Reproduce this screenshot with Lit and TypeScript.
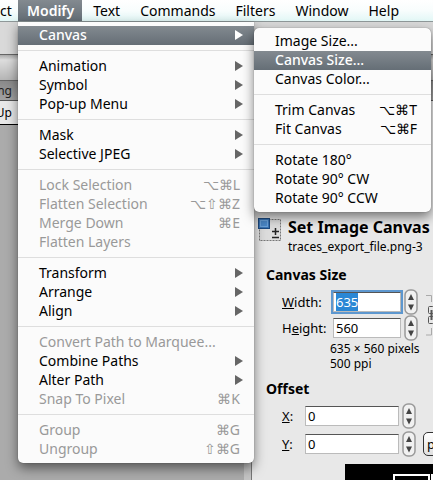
import { LitElement, html, css, nothing } from "lit";
import { customElement, property, query } from "lit/decorators.js";

type Item = { label: string; keys?: string; sub?: boolean; off?: boolean; on?: boolean };

const MODIFY: Item[][] = [
  [{ label: "Canvas", sub: true, on: true }],
  [{ label: "Animation", sub: true }, { label: "Symbol", sub: true }, { label: "Pop-up Menu", sub: true }],
  [{ label: "Mask", sub: true }, { label: "Selective JPEG", sub: true }],
  [
    { label: "Lock Selection", keys: "⌥⌘L", off: true },
    { label: "Flatten Selection", keys: "⌥⇧⌘Z", off: true },
    { label: "Merge Down", keys: "⌘E", off: true },
    { label: "Flatten Layers", off: true },
  ],
  [{ label: "Transform", sub: true }, { label: "Arrange", sub: true }, { label: "Align", sub: true }],
  [
    { label: "Convert Path to Marquee...", off: true },
    { label: "Combine Paths", sub: true },
    { label: "Alter Path", sub: true },
    { label: "Snap To Pixel", keys: "⌘K", off: true },
  ],
  [{ label: "Group", keys: "⌘G", off: true }, { label: "Ungroup", keys: "⇧⌘G", off: true }],
];

const CANVAS: Item[][] = [
  [{ label: "Image Size..." }, { label: "Canvas Size...", on: true }, { label: "Canvas Color..." }],
  [{ label: "Trim Canvas", keys: "⌥⌘T" }, { label: "Fit Canvas", keys: "⌥⌘F" }],
  [{ label: "Rotate 180°" }, { label: "Rotate 90° CW" }, { label: "Rotate 90° CCW" }],
];

@customElement("menu-panel")
export class MenuPanel extends LitElement {
  @property({ attribute: false }) groups: Item[][] = [];

  static styles = css`
    :host {
      display: block;
      background: #fbfbfb;
      border-radius: 0 0 5px 5px;
      padding: 4px 0;
      box-sizing: border-box;
      box-shadow: 0 5px 12px rgba(0, 0, 0, 0.5), 0 0 1px rgba(0, 0, 0, 0.5);
    }
    hr {
      height: 1px;
      margin: 5px 0 6px;
      border: 0;
      background: #dedede;
    }
    button {
      display: flex;
      align-items: center;
      justify-content: space-between;
      width: 100%;
      height: 19px;
      padding: 0 14px 2px 21px;
      border: 0;
      background: none;
      color: #000;
      font: 14px/17px "Noto Sans", sans-serif;
      white-space: nowrap;
    }
    button:disabled {
      color: #999;
    }
    .on {
      background: linear-gradient(#838a90, #656e76);
      color: #fff;
      font-weight: 500;
    }
    .arrow {
      width: 8px;
      height: 10px;
      margin-right: -3px;
      fill: #666;
    }
    .on .arrow {
      fill: #fff;
    }
  `;

  render() {
    return this.groups.map(
      (g, i) => html`${i ? html`<hr />` : nothing}${g.map(
        (it) => html`<button class=${it.on ? "on" : ""} ?disabled=${it.off} role="menuitem">
          <span>${it.label}</span>
          ${it.keys ? html`<span>${it.keys}</span>` : nothing}
          ${it.sub ? html`<svg class="arrow" viewBox="0 0 8 10"><path d="M0 0 8 5 0 10Z" /></svg>` : nothing}
        </button>`
      )}`
    );
  }
}

const stepper = html`<button class="step" aria-label="Step value">
  <svg viewBox="0 0 14 26">
    <rect x="1" y="1" width="12" height="24" rx="5" fill="#f1f1f1" stroke="#999" stroke-width="1.500" />
    <path d="M7 5 10 11H4ZM7 21.500 10 15.500H4Z" fill="#444" />
  </svg>
</button>`;

@customElement("app-root")
export class AppRoot extends LitElement {
  @query("#width") private widthField!: HTMLInputElement;

  static styles = css`
    :host {
      display: flex;
      flex-direction: column;
      position: relative;
      min-height: 100vh;
      overflow: hidden;
      background: #ababab;
      color: #000;
      font-family: "Noto Sans", sans-serif;
    }
    .bar {
      display: flex;
      gap: 2px;
      height: 22px;
      box-sizing: border-box;
      border-bottom: 1px solid #8f9899;
      background: linear-gradient(#fff, #f8fdfd 50%, #e2f7f6);
    }
    .bar button {
      padding: 0 9px;
      border: 0;
      background: none;
      color: #000;
      font: 14px/20px "Noto Sans", sans-serif;
      white-space: nowrap;
    }
    .bar .cut {
      width: 16px;
      padding: 0;
      text-align: left;
    }
    .bar .open {
      padding: 0 8px 0 9px;
      background: linear-gradient(#838a90, #656e76);
      color: #fff;
      font-weight: 600;
    }
    .strip {
      height: 32px;
      background: #d9d9d9;
      border-bottom: 1px solid #666;
    }
    .tools {
      height: 25px;
      background: linear-gradient(#aaa, #ddd 20%, #b5b5b5);
      border-bottom: 1px solid #666;
    }
    .tab {
      height: 19px;
      background: linear-gradient(#8a8a8a, #a2a2a2);
      border-bottom: 1px solid #555;
      color: #222;
      font-size: 12px;
      line-height: 19px;
    }
    .edge {
      display: flex;
      justify-content: flex-end;
      width: 12px;
    }
    .behind {
      flex: 1;
      display: grid;
      grid-template-columns: 252px 1fr;
    }
    .canvas {
      border-right: 1px solid #777;
      box-shadow: inset -7px 0 #c4c4c4;
    }
    .head {
      height: 23px;
      background: #e8e8e8;
      border-bottom: 1px solid #000;
      font-size: 12px;
      line-height: 23px;
    }
    .dialog {
      display: flex;
      flex-direction: column;
      min-width: 0;
      padding: 114px 0 0 6px;
      background: #e8e8e8;
      overflow: hidden;
      font-size: 13px;
    }
    .title {
      display: flex;
      gap: 6px;
      margin-bottom: 3px;
    }
    .title svg {
      flex: none;
      width: 24px;
      height: 24px;
      margin-top: 3px;
    }
    h1 {
      margin: 0;
      font: 700 16px/24px "Noto Sans", sans-serif;
      white-space: nowrap;
    }
    p {
      margin: 0;
      font-size: 12px;
      line-height: 15px;
      white-space: nowrap;
    }
    h2 {
      margin: 8px 0 4px 8px;
      font: 700 14px/20px "Noto Sans", sans-serif;
    }
    .size {
      display: flex;
      align-items: center;
      gap: 7px;
      margin-left: 24px;
    }
    .offset {
      display: flex;
      flex-direction: column;
      gap: 2px;
      margin-left: 24px;
    }
    .row {
      display: flex;
      align-items: center;
      height: 26px;
    }
    label {
      flex: none;
      width: 51px;
    }
    .offset label {
      width: 23px;
    }
    input {
      flex: none;
      width: 68px;
      height: 20px;
      box-sizing: border-box;
      margin: 0 3px 0 0;
      padding: 0 2px;
      border: 1px solid #bbb;
      border-top: 1px solid #555;
      outline: 0;
      background: #fff;
      font: 13px/18px "Noto Sans", sans-serif;
    }
    .offset input {
      width: 94px;
    }
    #width {
      box-shadow: 0 0 0 2px #5d97cf;
    }
    input::selection {
      background: #2a87d5;
      color: #fff;
    }
    .step {
      flex: none;
      width: 14px;
      height: 26px;
      padding: 0;
      border: 0;
      background: none;
    }
    .step svg {
      display: block;
    }
    .chain {
      flex: none;
      width: 9px;
      height: 42px;
      fill: none;
      stroke: #555;
    }
    .notes {
      margin-left: 72px;
    }
    select {
      flex: none;
      appearance: none;
      width: 60px;
      height: 24px;
      margin-left: 7px;
      padding: 0 3px;
      border: 1px solid #333;
      border-radius: 5px;
      background: linear-gradient(#fff, #e0e0e0);
      color: #000;
      font: 13px/20px "Noto Sans", sans-serif;
    }
    .preview {
      flex: 1;
      min-height: 16px;
      margin: 7px 0 0 87px;
      background: #000;
    }
    .preview svg {
      display: block;
      width: 88px;
      height: 16px;
    }
    .menu {
      position: absolute;
      top: 22px;
      left: 18px;
      width: 236px;
    }
    .sub {
      position: absolute;
      top: 28px;
      left: 254px;
      width: 177px;
      border-radius: 5px;
    }
  `;

  firstUpdated() {
    this.widthField.focus();
    this.widthField.select();
  }

  render() {
    return html`
      <nav class="bar">
        <button class="cut">ct</button>
        <button class="open">Modify</button>
        ${["Text", "Commands", "Filters", "Window", "Help"].map((t) => html`<button>${t}</button>`)}
      </nav>
      <div class="strip"></div>
      <div class="tools"></div>
      <div class="tab"><div class="edge">ng</div></div>
      <main class="behind">
        <div class="canvas"><div class="head"><div class="edge">Up</div></div></div>
        <section class="dialog">
          <div class="title">
            <svg viewBox="0 0 24 24">
              <rect x="1.500" y="1.500" width="21" height="21" fill="#dcdcdc" stroke="#777" stroke-dasharray="2 1" />
              <rect x="0.500" y="0.500" width="11" height="10" fill="#3a74b4" stroke="#1d4a80" />
              <rect x="2.500" y="2.500" width="7" height="6" fill="#4b88c8" stroke="#6ba2da" />
              <path d="M14 13.500H21M17.500 10V17M14 19.500H21" stroke="#222" stroke-width="1.500" />
            </svg>
            <div>
              <h1>Set Image Canvas</h1>
              <p>traces_export_file.png-3</p>
            </div>
          </div>
          <h2>Canvas Size</h2>
          <div class="size">
            <div>
              <div class="row">
                <label for="width"><u>W</u>idth:</label><input id="width" value="635" />${stepper}
              </div>
              <div class="row">
                <label for="height">H<u>e</u>ight:</label><input id="height" value="560" />${stepper}
              </div>
            </div>
            <svg class="chain" viewBox="0 0 9 42">
              <path d="M1 1.500H6.500V8M1 41H6.500V34" stroke="#aaa" />
              <rect x="3.500" y="12.500" width="5" height="7" rx="1" />
              <rect x="3.500" y="22.500" width="5" height="7" rx="1" />
              <path d="M6.500 16V26" stroke-width="2" />
            </svg>
          </div>
          <div class="notes">
            <p>635 × 560 pixels</p>
            <p>500 ppi</p>
          </div>
          <h2>Offset</h2>
          <div class="offset">
            <div class="row"><label for="x"><u>X</u>:</label><input id="x" value="0" />${stepper}</div>
            <div class="row">
              <label for="y"><u>Y</u>:</label><input id="y" value="0" />${stepper}
              <select aria-label="Unit"><option>p</option></select>
            </div>
          </div>
          <div class="preview">
            <svg viewBox="0 0 88 16">
              <path d="M49 16V11H84V16M87 16V11H92" fill="none" stroke="#fff" stroke-width="2" />
            </svg>
          </div>
        </section>
      </main>
      <menu-panel class="menu" .groups=${MODIFY}></menu-panel>
      <menu-panel class="sub" .groups=${CANVAS}></menu-panel>
    `;
  }
}
